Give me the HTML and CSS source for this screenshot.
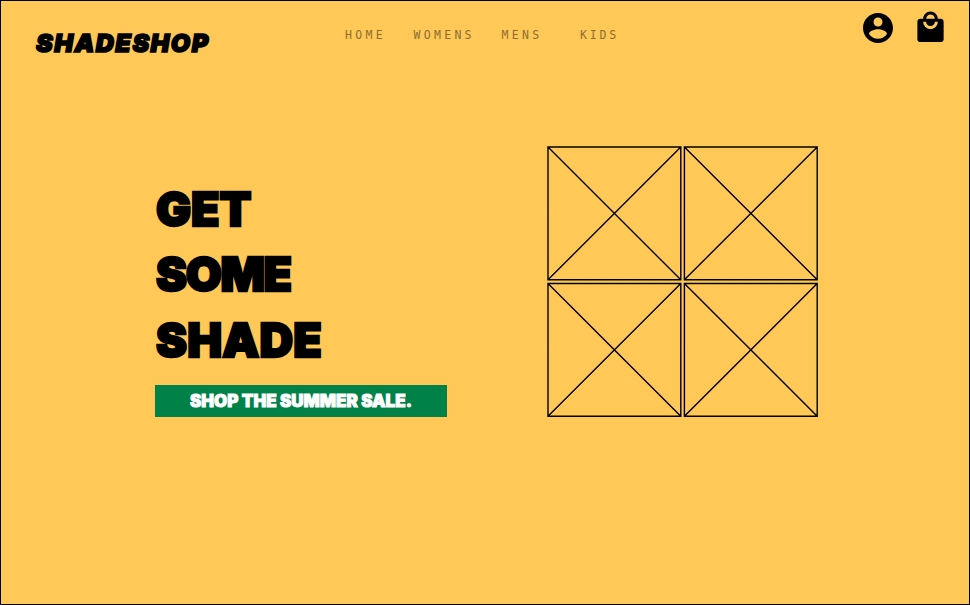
FILE: index.html
```html
<!DOCTYPE html>
<html lang="en">
<head>
<meta charset="utf-8">
<title>Shadeshop</title>
<link rel="stylesheet" href="styles.css">
</head>
<body>
<div class="page">
  <header class="header">
    <div class="logo">SHADESHOP</div>
    <nav class="nav">
      <a class="nav-home">HOME</a>
      <a class="nav-womens">WOMENS</a>
      <a class="nav-mens">MENS</a>
      <a class="nav-kids">KIDS</a>
    </nav>
    <div class="actions">
      <svg class="account" viewBox="0 0 24 24"><path d="M12 2C6.480 2 2 6.480 2 12s4.480 10 10 10 10-4.480 10-10S17.520 2 12 2zm0 3c1.660 0 3 1.340 3 3s-1.340 3-3 3-3-1.340-3-3 1.340-3 3-3zm0 14.200c-2.500 0-4.710-1.280-6-3.220.030-1.990 4-3.080 6-3.080 1.990 0 5.970 1.090 6 3.080-1.290 1.940-3.500 3.220-6 3.220z"/></svg>
      <svg class="bag" viewBox="0 0 24 24"><path d="M19 6h-2c0-2.760-2.240-5-5-5S7 3.240 7 6H5c-1.100 0-1.990.9-1.990 2L3 20c0 1.100.9 2 2 2h14c1.100 0 2-.9 2-2V8c0-1.100-.9-2-2-2zm-7-3c1.660 0 3 1.340 3 3H9c0-1.660 1.340-3 3-3zm0 10c-2.760 0-5-2.240-5-5h2c0 1.660 1.340 3 3 3s3-1.340 3-3h2c0 2.760-2.240 5-5 5z"/></svg>
    </div>
  </header>
  <main class="hero">
    <section class="copy">
      <h1 class="title"><span class="get">GET</span><span class="some">SOME</span><span class="shade">SHADE</span></h1>
      <a class="sale"><span>SHOP THE SUMMER SALE.</span></a>
    </section>
    <svg class="gallery" viewBox="0 0 272 272">
      <defs><path id="tile" d="M0 0h132.800v132.800H0zL132.800 132.800M132.800 0L0 132.800"/></defs>
      <use href="#tile" x="1" y="1"/>
      <use href="#tile" x="137.400" y="1"/>
      <use href="#tile" x="1" y="137.500"/>
      <use href="#tile" x="137.400" y="137.500"/>
    </svg>
  </main>
</div>
</body>
</html>
```
FILE: styles.css
```css
* { box-sizing: border-box; }
body { margin: 0; }
.page {
  width: 970px;
  height: 605px;
  border: 1px solid #000;
  background: #ffc857;
  overflow: hidden;
  font-family: Inter, sans-serif;
}
.header {
  display: grid;
  grid-template-columns: 344px 515px 1fr;
  height: 86px;
}
.logo {
  padding: 27px 0 0 35px;
  font-size: 25px;
  line-height: 30px;
  font-weight: 900;
  font-style: italic;
  letter-spacing: 1.5px;
  -webkit-text-stroke: 1.6px #000;
}
.nav {
  display: flex;
  padding-top: 26px;
  font-family: "DejaVu Sans Mono", monospace;
  font-size: 11.5px;
  line-height: 16px;
  letter-spacing: 3.3px;
  color: #8c6e31;
}
.nav-home { width: 68.5px; }
.nav-womens { width: 88px; }
.nav-mens { width: 78.5px; }
.nav-kids { letter-spacing: 2.8px; }
.actions { display: flex; gap: 17px; padding-top: 9px; }
.account { width: 36px; height: 36px; }
.bag { width: 35px; height: 35px; }
.hero { display: flex; align-items: flex-start; padding-left: 154px; }
.copy { width: 392px; padding-top: 89px; }
.title {
  margin: 0;
  padding-left: 1px;
  font-size: 46.5px;
  line-height: 66px;
  font-weight: 900;
  -webkit-text-stroke: 2.4px #000;
}
.title span { display: block; }
.get { letter-spacing: 0; }
.some { letter-spacing: -1.3px; line-height: 65px; }
.shade { letter-spacing: .2px; line-height: 67px; }
.sale {
  display: flex;
  align-items: center;
  justify-content: center;
  width: 292px;
  height: 32px;
  margin-top: 11px;
  background: #008148;
  color: #fff;
  font-size: 17px;
  font-weight: 900;
  white-space: nowrap;
  -webkit-text-stroke: .9px #fff;
}
.gallery {
  width: 272px;
  height: 272px;
  margin-top: 59px;
  fill: none;
  stroke: #000;
  stroke-width: 1.4;
}
```
